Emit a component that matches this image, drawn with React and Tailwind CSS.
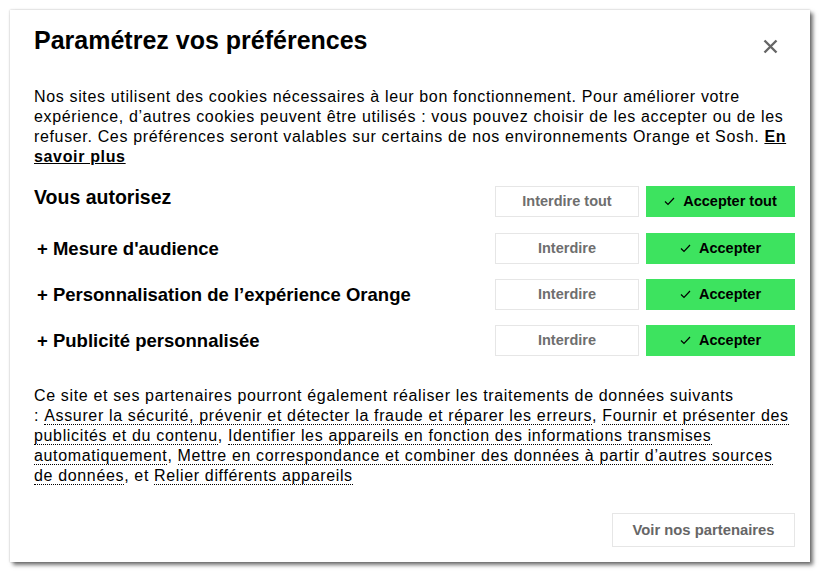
import React from 'react';

const purposes = [
  'Mesure d\'audience',
  'Personnalisation de l\u2019expérience Orange',
  'Publicité personnalisée',
];

const CheckIcon = () => (
  <svg width="11" height="9" viewBox="0 0 11 9" fill="none" className="mr-[8px]">
    <path d="M1 4.5 L4 7.5 L10 1" stroke="#000" strokeWidth="1.2" />
  </svg>
);

const ChoiceButtons = ({ all }) => (
  <div className="flex gap-[7px] shrink-0">
    <button className="w-[144px] h-[31px] border border-[#e6e6e6] bg-white text-[14.5px] font-bold text-[#6e6e6e]">
      {all ? 'Interdire tout' : 'Interdire'}
    </button>
    <button className="w-[149px] h-[31px] bg-[#3de35f] text-[14.5px] font-bold text-black flex items-center justify-center">
      <CheckIcon />
      {all ? 'Accepter tout' : 'Accepter'}
    </button>
  </div>
);

const Dotted = ({ children }) => (
  <span className="border-b border-dotted border-black">{children}</span>
);

export default function App() {
  return (
    <div className="w-[821px] h-[573px] bg-white pt-[10px] pl-[10px] font-['Liberation_Sans',Arial,sans-serif] text-black">
      <div className="w-[800px] h-[552px] bg-white shadow-[0_0_2px_rgba(0,0,0,0.25),3px_3px_4px_rgba(0,0,0,0.55)] pl-[24px] pr-[15px] pt-[15px] flex flex-col">
        {/* Header */}
        <div className="flex items-start justify-between">
          <h1 className="text-[25px] leading-[30px] font-bold">Paramétrez vos préférences</h1>
          <button className="mt-[14px] mr-[17px]">
            <svg width="15" height="15" viewBox="0 0 15 15">
              <path d="M1.5 1.5 L13.5 13.5 M13.5 1.5 L1.5 13.5" stroke="#666" strokeWidth="2.4" />
            </svg>
          </button>
        </div>

        <p className="mt-[32px] text-[16px] leading-[20px] tracking-[0.65px]">
          Nos sites utilisent des cookies nécessaires à leur bon fonctionnement. Pour améliorer votre expérience, d’autres cookies peuvent être utilisés : vous pouvez choisir de les accepter ou de les refuser. Ces préférences seront valables sur certains de nos environnements Orange et Sosh.{' '}
          <a className="font-bold underline">En savoir plus</a>
        </p>

        {/* Choices */}
        <div className="mt-[19px] flex flex-col gap-[15px]">
          <div className="flex items-center justify-between mb-[1px]">
            <h2 className="text-[19.5px] font-bold -mt-[8px]">Vous autorisez</h2>
            <ChoiceButtons all />
          </div>
          {purposes.map((p) => (
            <div key={p} className="flex items-center justify-between">
              <div className="text-[18.5px] font-bold pl-[3px]">+ {p}</div>
              <ChoiceButtons />
            </div>
          ))}
        </div>

        <p className="mt-[30px] text-[16px] leading-[20px] tracking-[0.65px]">
          Ce site et ses partenaires pourront également réaliser les traitements de données suivants :{'\u00a0'}<Dotted>Assurer la sécurité, prévenir et détecter la fraude et réparer les erreurs</Dotted>, <Dotted>Fournir et présenter des publicités et du contenu</Dotted>, <Dotted>Identifier les appareils en fonction des informations transmises automatiquement</Dotted>, <Dotted>Mettre en correspondance et combiner des données à partir d’autres sources de données</Dotted>, et <Dotted>Relier différents appareils</Dotted>
        </p>

        <div className="mt-[27px] flex justify-end">
          <button className="w-[183px] h-[34px] border border-[#e6e6e6] bg-white text-[14.8px] font-bold text-[#666]">
            Voir nos partenaires
          </button>
        </div>
      </div>
    </div>
  );
}
